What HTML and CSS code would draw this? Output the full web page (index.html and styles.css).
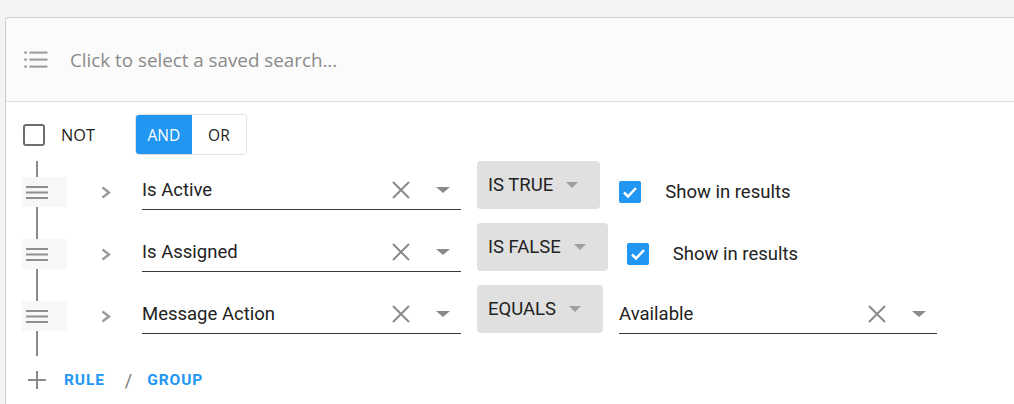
FILE: index.html
```html
<!DOCTYPE html>
<html>
<head>
<meta charset="utf-8">
<link rel="stylesheet" href="styles.css">
</head>
<body>
<div class="card">
  <div class="card-header">
    <svg class="list-icon" width="24" height="17" viewBox="0 0 24 17">
      <circle cx="1.6" cy="1.6" r="1.4"/><circle cx="1.6" cy="8.6" r="1.4"/><circle cx="1.6" cy="15.6" r="1.4"/>
      <rect x="5.5" y="0.6" width="18" height="2"/><rect x="5.5" y="7.6" width="18" height="2"/><rect x="5.5" y="14.6" width="18" height="2"/>
    </svg>
    <span class="placeholder">Click to select a saved search...</span>
  </div>
  <div class="card-body">
    <div class="combinator-row">
      <span class="cb-empty"></span>
      <span class="not-label">NOT</span>
      <div class="toggle">
        <span class="toggle-btn active">AND</span>
        <span class="toggle-btn">OR</span>
      </div>
    </div>

    <div class="rules">
      <div class="rule">
        <div class="handle">
          <svg width="22" height="13" viewBox="0 0 22 13"><rect y="0" width="22" height="2"/><rect y="5.5" width="22" height="2"/><rect y="11" width="22" height="2"/></svg>
        </div>
        <svg class="chevron" width="10" height="13" viewBox="0 0 10 13"><polyline points="1.5,1.5 8,6.5 1.5,11.5"/></svg>
        <div class="field">
          <span class="field-text">Is Active</span>
          <svg class="clear" width="18" height="18" viewBox="0 0 18 18"><path d="M1 1L17 17M17 1L1 17"/></svg>
          <svg class="caret" width="14" height="6" viewBox="0 0 14 6"><path d="M0 0H14L7 6Z"/></svg>
        </div>
        <div class="op"><span>IS TRUE</span><svg class="op-caret" width="12" height="6" viewBox="0 0 12 6"><path d="M0 0H12L6 6Z"/></svg></div>
        <span class="cb-checked"><svg width="22" height="22" viewBox="0 0 22 22"><polyline points="5,11.5 9,15.5 17,7"/></svg></span>
        <span class="show-label">Show in results</span>
      </div>

      <div class="rule">
        <div class="handle">
          <svg width="22" height="13" viewBox="0 0 22 13"><rect y="0" width="22" height="2"/><rect y="5.5" width="22" height="2"/><rect y="11" width="22" height="2"/></svg>
        </div>
        <svg class="chevron" width="10" height="13" viewBox="0 0 10 13"><polyline points="1.5,1.5 8,6.5 1.5,11.5"/></svg>
        <div class="field">
          <span class="field-text">Is Assigned</span>
          <svg class="clear" width="18" height="18" viewBox="0 0 18 18"><path d="M1 1L17 17M17 1L1 17"/></svg>
          <svg class="caret" width="14" height="6" viewBox="0 0 14 6"><path d="M0 0H14L7 6Z"/></svg>
        </div>
        <div class="op"><span>IS FALSE</span><svg class="op-caret" width="12" height="6" viewBox="0 0 12 6"><path d="M0 0H12L6 6Z"/></svg></div>
        <span class="cb-checked"><svg width="22" height="22" viewBox="0 0 22 22"><polyline points="5,11.5 9,15.5 17,7"/></svg></span>
        <span class="show-label">Show in results</span>
      </div>

      <div class="rule">
        <div class="handle">
          <svg width="22" height="13" viewBox="0 0 22 13"><rect y="0" width="22" height="2"/><rect y="5.5" width="22" height="2"/><rect y="11" width="22" height="2"/></svg>
        </div>
        <svg class="chevron" width="10" height="13" viewBox="0 0 10 13"><polyline points="1.5,1.5 8,6.5 1.5,11.5"/></svg>
        <div class="field">
          <span class="field-text">Message Action</span>
          <svg class="clear" width="18" height="18" viewBox="0 0 18 18"><path d="M1 1L17 17M17 1L1 17"/></svg>
          <svg class="caret" width="14" height="6" viewBox="0 0 14 6"><path d="M0 0H14L7 6Z"/></svg>
        </div>
        <div class="op"><span>EQUALS</span><svg class="op-caret" width="12" height="6" viewBox="0 0 12 6"><path d="M0 0H12L6 6Z"/></svg></div>
        <div class="field value-field">
          <span class="field-text">Available</span>
          <svg class="clear" width="18" height="18" viewBox="0 0 18 18"><path d="M1 1L17 17M17 1L1 17"/></svg>
          <svg class="caret" width="14" height="6" viewBox="0 0 14 6"><path d="M0 0H14L7 6Z"/></svg>
        </div>
      </div>
    </div>

    <div class="footer">
      <svg class="plus" width="18" height="18" viewBox="0 0 18 18"><path d="M9 0V18M0 9H18"/></svg>
      <span class="link">RULE</span>
      <span class="slash">/</span>
      <span class="link">GROUP</span>
    </div>
  </div>
</div>
</body>
</html>
```

FILE: styles.css
```css
html, body {
  margin: 0;
  padding: 0;
}
body {
  background: #f4f4f4;
  height: 404px;
  overflow: hidden;
  font-family: Roboto, "Liberation Sans", sans-serif;
  color: #222;
}
.card {
  margin: 17px 0 0 5px;
  border-top: 1px solid #cdcdcd;
  border-left: 1px solid #cdcdcd;
  border-top-left-radius: 4px;
  background: #fff;
  height: 400px;
}
.card-header {
  height: 83px;
  background: #fbfbfb;
  border-bottom: 1px solid #e0e0e0;
  border-top-left-radius: 4px;
  display: flex;
  align-items: center;
  padding-left: 18px;
}
.list-icon {
  fill: #9b9b9b;
  flex: none;
}
.placeholder {
  margin-left: 22px;
  font-family: "Open Sans", sans-serif;
  font-size: 18.8px;
  color: #8a8a8a;
}
.card-body {
  padding: 12px 0 0 16px;
}
.combinator-row {
  display: flex;
  align-items: center;
  height: 41px;
}
.cb-empty {
  width: 18px;
  height: 18px;
  border: 2.5px solid #6e6e6e;
  border-radius: 3px;
  margin-left: 1px;
}
.not-label {
  font-family: "Open Sans", sans-serif;
  font-size: 16.3px;
  margin-left: 16px;
  color: #222;
}
.toggle {
  margin-left: 40px;
  display: flex;
  height: 41px;
  border: 1px solid #e0e0e0;
  border-radius: 4px;
  overflow: hidden;
  box-sizing: border-box;
}
.toggle-btn {
  display: flex;
  align-items: center;
  justify-content: center;
  font-family: "Open Sans", sans-serif;
  font-size: 15.5px;
  color: #222;
  width: 54px;
  background: #fff;
}
.toggle-btn.active {
  width: 56px;
  background: #2196f3;
  color: #fff;
}
.rules {
  margin-top: 6px;
  padding-bottom: 9px;
  background: linear-gradient(#8c8c8c, #8c8c8c) no-repeat 14px 0 / 2px 100%;
}
.rule {
  display: flex;
  align-items: flex-start;
  height: 62px;
}
.handle {
  align-self: center;
  width: 45px;
  height: 30px;
  box-sizing: border-box;
  background: #f7f7f7;
  display: flex;
  align-items: center;
  padding-left: 4px;
  fill: #8f8f8f;
}
.chevron {
  align-self: center;
  margin-left: 34px;
  fill: none;
  stroke: #9a9a9a;
  stroke-width: 2.4;
  flex: none;
}
.field {
  margin-left: 31px;
  width: 319px;
  height: 49px;
  box-sizing: border-box;
  border-bottom: 1px solid #3a3a3a;
  display: flex;
  align-items: center;
  padding-top: 10px;
  padding-right: 11px;
}
.field-text {
  flex: 1;
  font-size: 18.5px;
  color: #222;
}
.clear {
  stroke: #8a8a8a;
  stroke-width: 2;
  flex: none;
}
.caret {
  margin-left: 26px;
  fill: #8a8a8a;
  flex: none;
}
.op {
  margin-left: 16px;
  height: 48px;
  box-sizing: border-box;
  background: #e0e0e0;
  border-radius: 4px;
  display: flex;
  align-items: center;
  padding: 0 22px 0 11px;
  font-size: 18.5px;
  color: #222;
}
.op-caret {
  margin-left: 13px;
  fill: #9e9e9e;
  flex: none;
}
.cb-checked {
  align-self: center;
  margin-left: 19px;
  width: 22px;
  height: 22px;
  background: #2196f3;
  border-radius: 2px;
  flex: none;
}
.cb-checked svg {
  display: block;
  fill: none;
  stroke: #fff;
  stroke-width: 2.5;
}
.show-label {
  align-self: center;
  margin-left: 24px;
  font-size: 18.5px;
  color: #222;
}
.value-field {
  margin-left: 16px;
  width: 318px;
}
.footer {
  display: flex;
  align-items: center;
  margin-top: 12px;
  height: 24px;
}
.plus {
  margin-left: 6px;
  stroke: #8a8a8a;
  stroke-width: 2;
  flex: none;
}
.link {
  font-size: 15.5px;
  font-weight: bold;
  color: #2196f3;
  letter-spacing: 0.9px;
}
.plus + .link {
  margin-left: 18px;
}
.slash {
  margin: 0 15px 0 20px;
  font-size: 18px;
  color: #777;
}
```
